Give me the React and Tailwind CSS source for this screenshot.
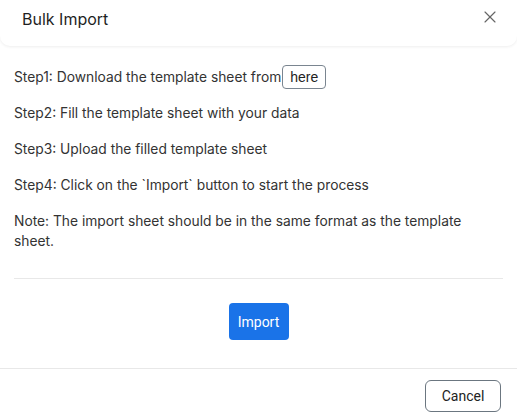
import { X } from 'lucide-react';

const steps = [
  'Step2: Fill the template sheet with your data',
  'Step3: Upload the filled template sheet',
  'Step4: Click on the `Import` button to start the process',
];

const App = () => {
  return (
    <div className="w-[517px] h-[417px] bg-white overflow-hidden font-['Inter',sans-serif] text-[#222]">
      {/* Header */}
      <div className="h-[46px] flex items-center justify-between pl-[22px] pr-[17px] rounded-b-[10px] shadow-[0_1px_3px_rgba(0,0,0,0.07)]">
        <h2 className="text-[16px] font-normal text-[#1f1f1f] -mt-[8px]">Bulk Import</h2>
        <button className="text-[#666] -mt-[12px]">
          <X size={20} strokeWidth={1.4} />
        </button>
      </div>

      {/* Body */}
      <div className="px-[14px] pt-[19px] text-[13.8px] leading-[20px] text-[#333]">
        <div className="flex items-center h-[24px]">
          <span>Step1: Download the template sheet from</span>
          <button className="ml-[1px] h-[24px] px-[7px] border border-[#7a8590] rounded-[4px] text-[14px] font-['Liberation_Sans',sans-serif] text-[#222]">
            here
          </button>
        </div>
        <p className="mt-[14px]">{steps[0]}</p>
        <p className="mt-[16px]">{steps[1]}</p>
        <p className="mt-[16px]">{steps[2]}</p>
        <p className="mt-[16px]">
          Note: The import sheet should be in the same format as the template sheet.
        </p>
        <div className="mt-[27px] border-t border-[#e8e8e8]" />
        <div className="flex justify-center pt-[24px] pb-[28px]">
          <button className="h-[37px] w-[60px] rounded-[4px] bg-[#1a73e8] text-white text-[14px] font-['Roboto',sans-serif]">
            Import
          </button>
        </div>
      </div>

      {/* Footer */}
      <div className="border-t border-[#e8e8e8] flex justify-end px-[16px] pt-[11px]">
        <button className="h-[32px] w-[76px] rounded-[6px] border border-[#6b7680] text-[14px] text-[#222] font-['Roboto',sans-serif]">
          Cancel
        </button>
      </div>
    </div>
  );
};

export default App;
